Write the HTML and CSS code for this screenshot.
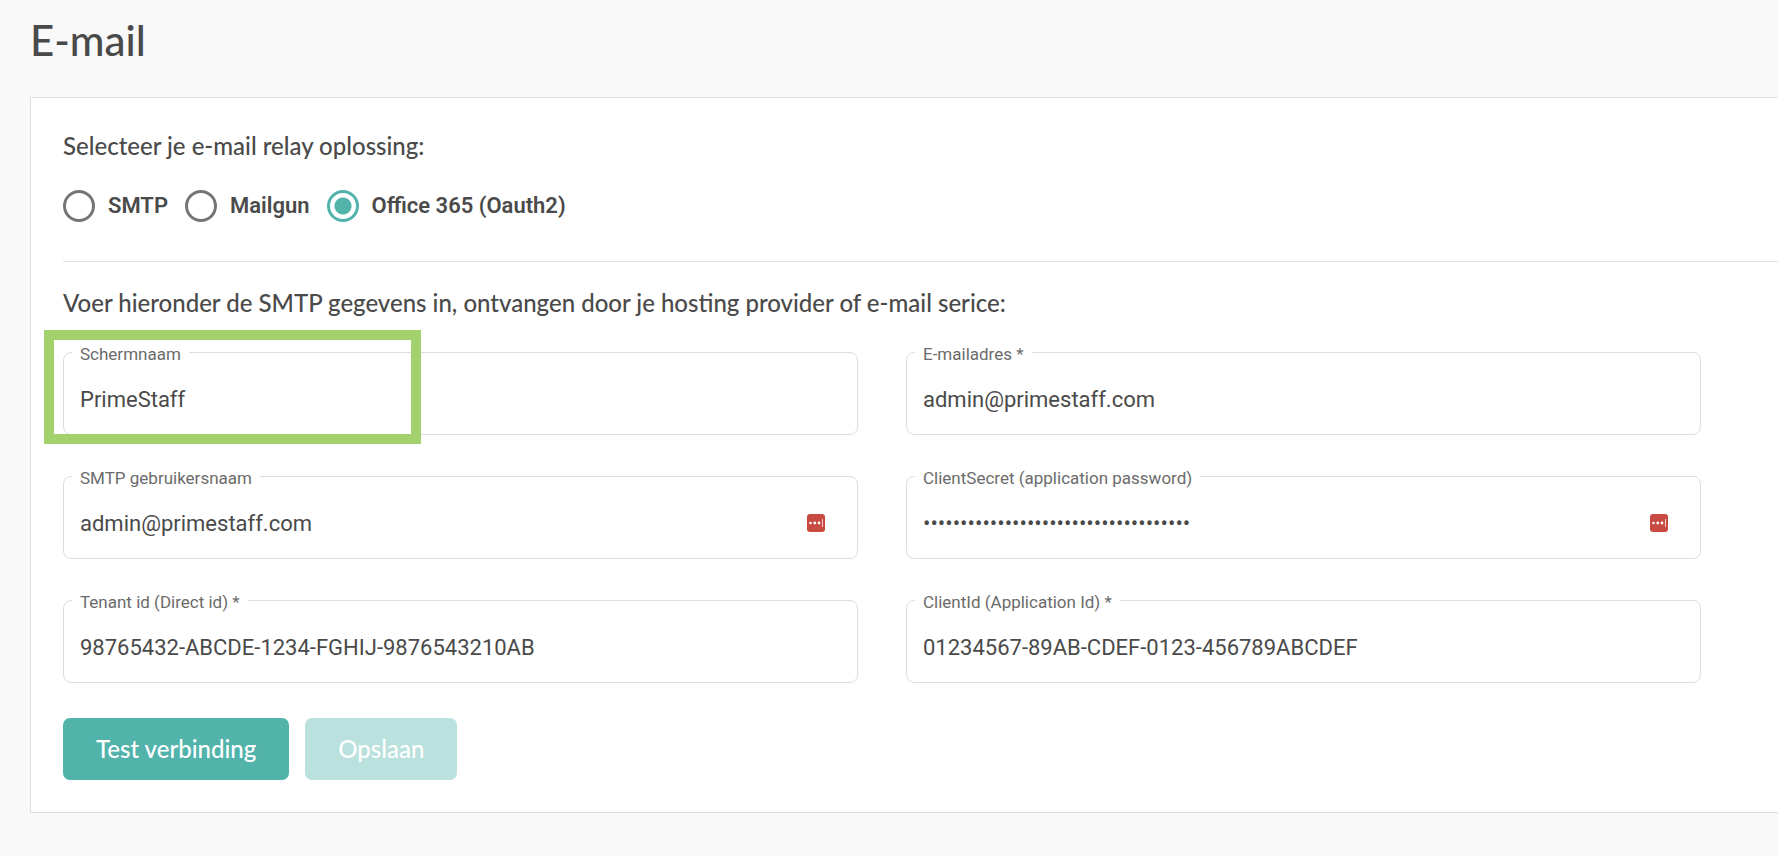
FILE: index.html
```html
<!DOCTYPE html>
<html lang="nl">
<head>
<meta charset="utf-8">
<meta name="viewport" content="width=device-width, initial-scale=1">
<title>E-mail</title>
<link rel="stylesheet" href="styles.css">
</head>
<body>
<main class="page">
  <h1 class="title">E-mail</h1>
  <form class="card">
    <fieldset class="relay">
      <legend class="intro">Selecteer je e-mail relay oplossing:</legend>
      <div class="options">
        <label class="option"><input class="radio" type="radio" name="relay">SMTP</label>
        <label class="option"><input class="radio" type="radio" name="relay">Mailgun</label>
        <label class="option"><input class="radio" type="radio" name="relay" checked>Office 365 (Oauth2)</label>
      </div>
    </fieldset>
    <p class="intro">Voer hieronder de SMTP gegevens in, ontvangen door je hosting provider of e-mail serice:</p>
    <div class="fields">
      <div class="field">
        <label class="label" for="name">Schermnaam</label>
        <input class="input" id="name" type="text" value="PrimeStaff">
        <div class="highlight"></div>
      </div>
      <div class="field">
        <label class="label" for="mail">E-mailadres *</label>
        <input class="input" id="mail" type="text" value="admin@primestaff.com">
      </div>
      <div class="field">
        <label class="label" for="user">SMTP gebruikersnaam</label>
        <input class="input" id="user" type="text" value="admin@primestaff.com">
        <svg class="manager" viewBox="0 0 18 18" aria-hidden="true"><rect width="18" height="18" rx="3" fill="#c94a40"/><g fill="#fff"><circle cx="3.5" cy="9" r="1.3"/><circle cx="7.8" cy="9" r="1.4"/><circle cx="12" cy="9" r="1.4"/><rect x="15" y="5" width="1" height="8" opacity=".75"/></g></svg>
      </div>
      <div class="field">
        <label class="label" for="secret">ClientSecret (application password)</label>
        <input class="input" id="secret" type="password" value="abcdefghijklmnopqrstuvwxyz0123456789">
        <svg class="manager" viewBox="0 0 18 18" aria-hidden="true"><rect width="18" height="18" rx="3" fill="#c94a40"/><g fill="#fff"><circle cx="3.5" cy="9" r="1.3"/><circle cx="7.8" cy="9" r="1.4"/><circle cx="12" cy="9" r="1.4"/><rect x="15" y="5" width="1" height="8" opacity=".75"/></g></svg>
      </div>
      <div class="field">
        <label class="label" for="tenant">Tenant id (Direct id) *</label>
        <input class="input" id="tenant" type="text" value="98765432-ABCDE-1234-FGHIJ-9876543210AB">
      </div>
      <div class="field">
        <label class="label" for="client">ClientId (Application Id) *</label>
        <input class="input" id="client" type="text" value="01234567-89AB-CDEF-0123-456789ABCDEF">
      </div>
    </div>
    <div class="actions">
      <button class="button" type="button">Test verbinding</button>
      <button class="button" type="button" disabled>Opslaan</button>
    </div>
  </form>
</main>
</body>
</html>
```
FILE: styles.css
```css
* {
  box-sizing: border-box;
}

body {
  margin: 0;
  background: #f9f9f9;
  color: #4a4a4a;
  font-family: Roboto, sans-serif;
  font-size: 22px;
}

.page {
  padding: 16px 0 42px 30px;
}

.title {
  margin: 0 0 33px;
  font-family: Lato, sans-serif;
  font-size: 42px;
  font-weight: 500;
  line-height: 48px;
}

.card {
  padding: 31px 0 32px 32px;
  background: #fff;
  border: 1px solid #dedede;
  border-right: 0;
}

.relay {
  margin: 0 0 24px;
  padding: 0 0 39px;
  border: 0;
  border-bottom: 1px solid #e2e2e2;
}

.intro {
  margin: 0;
  padding: 0;
  font-family: Lato, sans-serif;
  font-size: 24px;
  font-weight: 500;
  line-height: 34px;
}

.options {
  display: flex;
  flex-wrap: wrap;
  gap: 17px;
  padding-top: 27px;
}

.option {
  display: flex;
  align-items: center;
  gap: 13px;
  font-weight: 600;
  line-height: 32px;
}

.radio {
  appearance: none;
  width: 32px;
  height: 32px;
  margin: 0;
  border: 3px solid #757575;
  border-radius: 50%;
}

.radio:checked {
  border-color: #52b3ab;
  background: radial-gradient(circle, #52b3ab 8px, #fff 9px);
}

.fields {
  display: grid;
  grid-template-columns: 1fr 1fr;
  gap: 41px 48px;
  padding: 32px 77px 35px 0;
}

.field {
  position: relative;
}

.label {
  position: absolute;
  top: -8px;
  left: 9px;
  padding: 0 8px;
  background: #fff;
  color: #6b6b6b;
  font-size: 17px;
  line-height: 20px;
}

.input {
  display: block;
  width: 100%;
  height: 83px;
  padding: 12px 16px 0;
  border: 1px solid #dedede;
  border-radius: 8px;
  background: #fff;
  color: #4a4a4a;
  font: inherit;
}

.manager {
  position: absolute;
  top: 38px;
  right: 33px;
  width: 18px;
  height: 18px;
}

.highlight {
  position: absolute;
  top: -22px;
  left: -19px;
  width: 377px;
  height: 114px;
  border: 10px solid #a3d16e;
  pointer-events: none;
}

.actions {
  display: flex;
  gap: 16px;
}

.button {
  padding: 14px 33px;
  border: 0;
  border-radius: 7px;
  background: #52b3ab;
  color: #fff;
  font-family: Lato, sans-serif;
  font-size: 24px;
  font-weight: 500;
  line-height: 34px;
}

.button:disabled {
  background: #bae1de;
}
```
